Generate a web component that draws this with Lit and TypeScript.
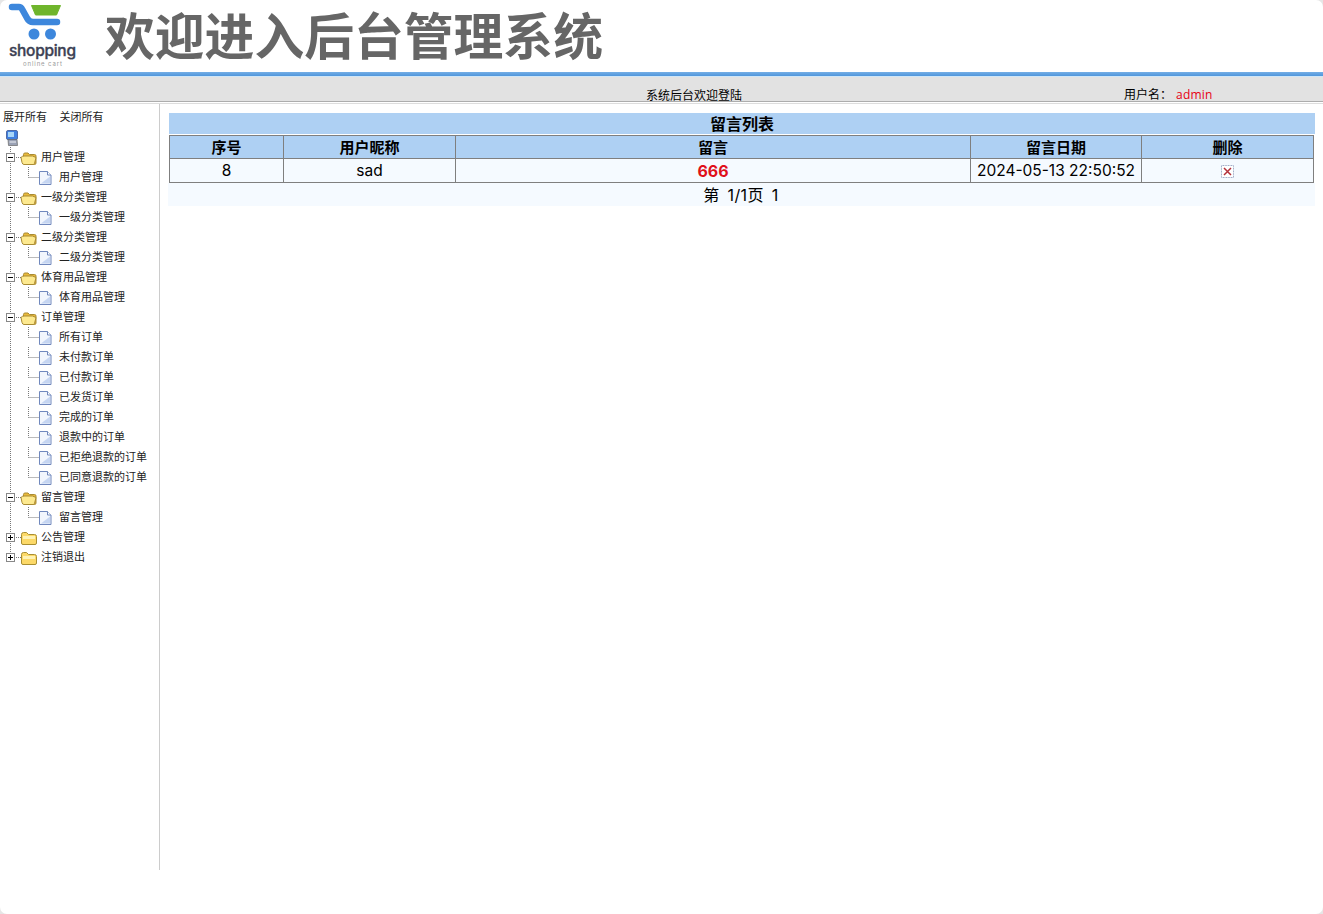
import { LitElement, html, css, svg } from "lit";
import { customElement } from "lit/decorators.js";

type Row = { t: string; kind: "open" | "closed" | "leaf"; last?: boolean };

const rows: Row[] = [
  { t: "用户管理", kind: "open" }, { t: "用户管理", kind: "leaf" },
  { t: "一级分类管理", kind: "open" }, { t: "一级分类管理", kind: "leaf" },
  { t: "二级分类管理", kind: "open" }, { t: "二级分类管理", kind: "leaf" },
  { t: "体育用品管理", kind: "open" }, { t: "体育用品管理", kind: "leaf" },
  { t: "订单管理", kind: "open" },
  { t: "所有订单", kind: "leaf" }, { t: "未付款订单", kind: "leaf" }, { t: "已付款订单", kind: "leaf" },
  { t: "已发货订单", kind: "leaf" }, { t: "完成的订单", kind: "leaf" }, { t: "退款中的订单", kind: "leaf" },
  { t: "已拒绝退款的订单", kind: "leaf" }, { t: "已同意退款的订单", kind: "leaf" },
  { t: "留言管理", kind: "open" }, { t: "留言管理", kind: "leaf" },
  { t: "公告管理", kind: "closed" }, { t: "注销退出", kind: "closed", last: true },
];

const dots = (x1: number, y1: number, x2: number, y2: number) =>
  svg`<line x1=${x1} y1=${y1} x2=${x2} y2=${y2} stroke="#777" stroke-width="1" stroke-dasharray="1 1"/>`;

const pageIcon = svg`
  <path d="M39.5 4.500h8l3.500 3.500v9.500h-11.500z" fill="#f2f6fd" stroke="#7088bd"/>
  <path d="M47.500 4.500v3.500h3.500" fill="#fff" stroke="#7088bd"/>
  <path d="M41 16.500h9v-7z" fill="#c6d6f2"/>`;

const folderClosed = svg`
  <path d="M21.500 7.500q0-2 2-2h3l2 2h6q2 0 2 2v6.500q0 1.500-1.500 1.500h-12q-1.500 0-1.500-1.500z" fill="#fcd968" stroke="#a98f33"/>
  <path d="M23 9h12v3H23z" fill="#fff3b5"/>`;

const folderOpen = svg`
  <path d="M23.500 7.500q0-1.500 1.500-1.500h3l1.500 1.500h5q1.500 0 1.500 1.500v7q0 1.500-1.500 1.500h-9q-2 0-2-2z" fill="#e9b93c" stroke="#a98b33"/>
  <path d="M21 10.500q1-1.500 3-1.500h8.500l3.500 1.500-1.500 6q-.5 1-1.500 1h-9q-1.500 0-2-2z" fill="#fde98f" stroke="#a98b33"/>`;

const rowIcons = (r: Row) => {
  if (r.kind === "leaf") {
    return svg`<svg class="ic" width="56" height="20" viewBox="0 0 56 20">
      ${dots(10.500, 0, 10.500, 20)}
      ${dots(28.500, 0, 28.500, 10.500)}
      ${dots(28.500, 10.500, 39, 10.500)}
      ${pageIcon}
    </svg>`;
  }
  return svg`<svg class="ic" width="38" height="20" viewBox="0 0 38 20">
    ${dots(10.500, 0, 10.500, r.last ? 6 : 20)}
    ${dots(16, 10.500, 21, 10.500)}
    <rect x="6.500" y="6.500" width="8" height="8" fill="#fff" stroke="#888"/>
    <path d="M8 10.500h5" stroke="#000"/>
    ${r.kind === "closed" ? svg`<path d="M10.500 8v5" stroke="#000"/>` : ""}
    ${r.kind === "open" ? folderOpen : folderClosed}
  </svg>`;
};

@customElement("app-root")
export class AppRoot extends LitElement {
  static styles = css`
    :host { display: block; height: 914px; background: #e6e6e6; font-family: "Noto Sans CJK SC", "Noto Sans", sans-serif; color: #000; overflow: hidden; }
    .page { height: 914px; background: #fff; border-radius: 7px; overflow: hidden; }
    .head { height: 72px; display: flex; align-items: flex-start; }
    .logo { display: block; flex: none; }
    .logo .shop { font: 500 15.500px "Inter", sans-serif; fill: #3c4153; stroke: #3c4153; stroke-width: .35px; }
    .logo .cart { font: 400 6px "Inter", sans-serif; fill: #9a9a9a; }
    h1 { margin: 0 0 0 25px; font: 700 49.800px/66px "Noto Sans CJK SC", sans-serif; color: #666; white-space: nowrap; }
    .blue { height: 5px; background: linear-gradient(#74aee6, #4f96dc 80%, #cfe6f7 80%); }
    .bar { height: 24px; background: #e2e2e2; display: grid; grid-template-columns: 646px 478px 1fr; font-size: 12px; line-height: 16px; align-items: end; }
    .bar > span { position: relative; top: 2px; }
    .rule { height: 3px; background: linear-gradient(#adadad 33%, #fff 33%, #fff 66%, #ddd 66%); }
    .bar .admin { color: #e60012; margin-left: 4px; font-family: "Open Sans", sans-serif; letter-spacing: .2px; }
    .body { display: flex; height: 766px; }
    aside { width: 159px; flex: none; border-right: 1px solid #ccc; font-size: 11px; line-height: 20px; color: #222; }
    .all { height: 23px; padding: 2px 0 0 3px; box-sizing: border-box; display: flex; gap: 12.500px; }
    .root { height: 20px; }
    .root svg { display: block; }
    .row { display: flex; height: 20px; white-space: nowrap; }
    .row span { padding-left: 3px; line-height: 18px; }
    .ic { display: block; flex: none; }
    main { flex: 1; padding: 9px 8px 0 9px; min-width: 0; }
    .title { height: 21px; background: #aed0f3; text-align: center; font: 700 16px/21px "Noto Sans CJK SC", sans-serif; }
    table { width: 1145px; margin-top: 1px; border-collapse: collapse; table-layout: fixed; font: 15.500px "Inter", "Noto Sans CJK SC", sans-serif; }
    th, td { border: 1px solid #7f7f7f; padding: 0; text-align: center; line-height: 22px; overflow: hidden; white-space: nowrap; }
    th { background: #aed0f3; height: 22px; font: 700 15px/22px "Noto Sans CJK SC", sans-serif; }
    td { background: #f5faff; height: 23px; }
    .msg { color: #e0101a; font-weight: 700; font-size: 16px; }
    .del { display: block; margin: 2px auto 0; }
    .foot { height: 23px; margin-left: -1px; background: #f5faff; text-align: center; font: 16px/24px "Inter", "Noto Sans CJK SC", sans-serif; word-spacing: 3px; letter-spacing: .4px; padding-right: 1px; }
  `;

  render() {
    return html`<div class="page">
      <header class="head">
        <svg class="logo" width="80" height="72" viewBox="0 0 80 72">
          <path d="M31.500 5.500h29l-4 9.500h-21z" fill="#6fb52c" stroke="#6fb52c" stroke-linejoin="round"/>
          <path d="M12 7h7q2 0 3 2l5 9q2 4 6 4h24" fill="none" stroke="#3d87dc" stroke-width="6.500" stroke-linecap="round" stroke-linejoin="round"/>
          <circle cx="34" cy="34" r="5.500" fill="#3d87dc"/>
          <circle cx="50.500" cy="34" r="5.500" fill="#3d87dc"/>
          <text class="shop" x="9" y="56" textLength="67">shopping</text>
          <text class="cart" x="23" y="65.500" textLength="39">online cart</text>
        </svg>
        <h1>欢迎进入后台管理系统</h1>
      </header>
      <div class="blue"></div>
      <div class="bar">
        <span></span>
        <span>系统后台欢迎登陆</span>
        <span>用户名：<span class="admin">admin</span></span>
      </div>
      <div class="rule"></div>
      <div class="body">
        <aside>
          <div class="all"><span>展开所有</span><span>关闭所有</span></div>
          <div class="root">
            <svg width="24" height="20" viewBox="0 0 24 20">
              <rect x="6.500" y="3.500" width="11" height="9" rx="1.500" fill="#3f7fe0" stroke="#4f6aa5"/>
              <rect x="8" y="5" width="6" height="5" fill="#a8d6f8"/>
              <path d="M8 12.500h9l.5 6h-9z" fill="#9aa2b5" stroke="#666" stroke-width=".7"/>
              <path d="M9.500 15h6.500" stroke="#eef0f5"/>
            </svg>
          </div>
          ${rows.map(r => html`<div class="row">${rowIcons(r)}<span>${r.t}</span></div>`)}
        </aside>
        <main>
          <div class="title">留言列表</div>
          <table>
            <colgroup>
              <col style="width:114px"><col style="width:172px"><col style="width:515px"><col style="width:171px"><col style="width:172px">
            </colgroup>
            <tr><th>序号</th><th>用户昵称</th><th>留言</th><th>留言日期</th><th>删除</th></tr>
            <tr>
              <td>8</td><td>sad</td><td class="msg">666</td><td>2024-05-13 22:50:52</td>
              <td>
                <svg class="del" width="13" height="13" viewBox="0 0 13 13">
                  <rect x=".5" y=".5" width="12" height="12" fill="#fff" stroke="#9aa7c4" stroke-dasharray="1 .6"/>
                  <path d="M3 3l7 7M10 3l-7 7" stroke="#b3303a" stroke-width="1.500"/>
                </svg>
              </td>
            </tr>
          </table>
          <div class="foot">第 1/1页 1</div>
        </main>
      </div>
    </div>`;
  }
}
